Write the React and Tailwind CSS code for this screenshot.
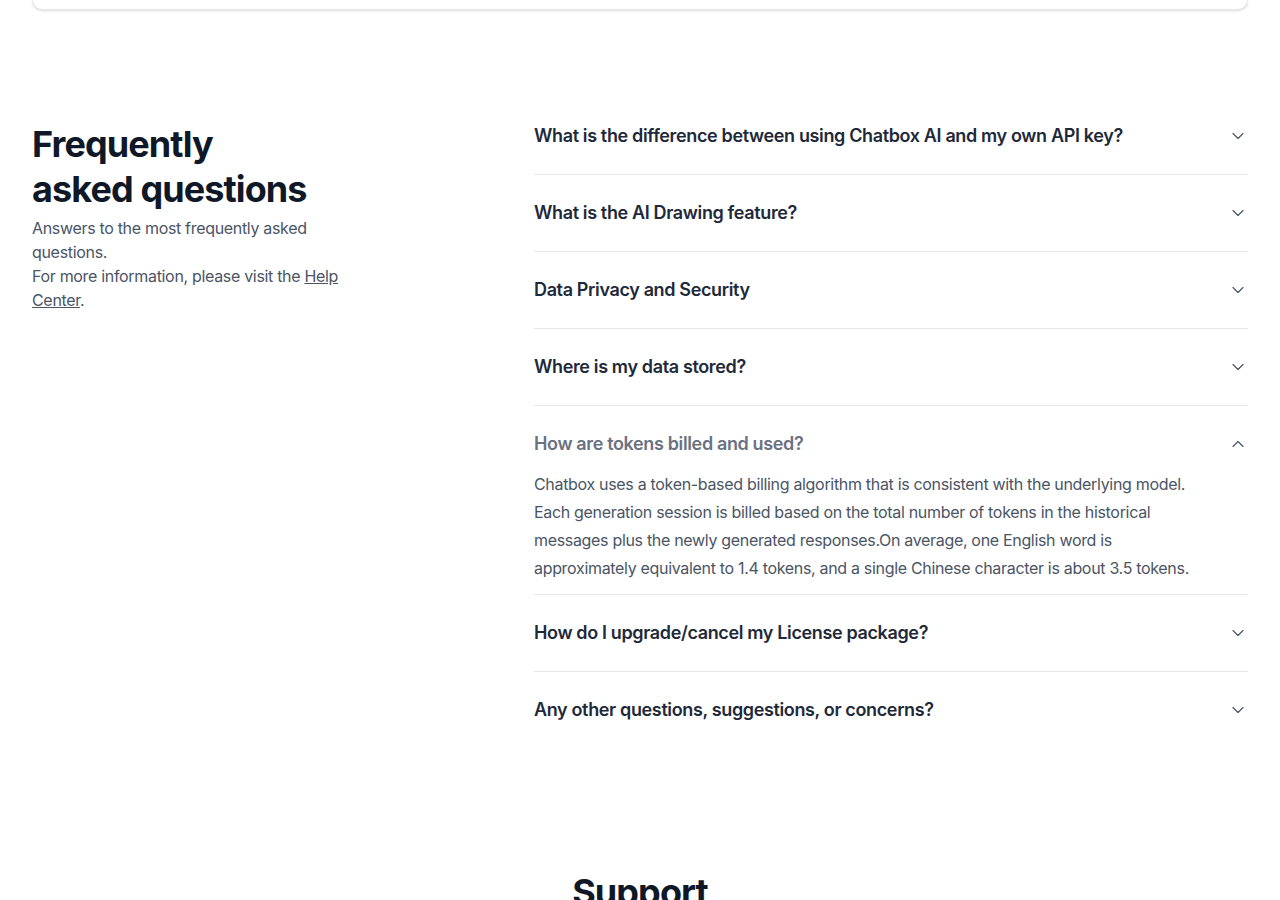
import { ChevronDown, ChevronUp } from "lucide-react";

const faqs = [
    { q: "What is the difference between using Chatbox AI and my own API key?" },
    { q: "What is the AI Drawing feature?" },
    { q: "Data Privacy and Security" },
    { q: "Where is my data stored?" },
    {
        q: "How are tokens billed and used?",
        a: "Chatbox uses a token-based billing algorithm that is consistent with the underlying model. Each generation session is billed based on the total number of tokens in the historical messages plus the newly generated responses.On average, one English word is approximately equivalent to 1.4 tokens, and a single Chinese character is about 3.5 tokens.",
        open: true,
    },
    { q: "How do I upgrade/cancel my License package?" },
    { q: "Any other questions, suggestions, or concerns?" },
];

function FaqItem({ q, a, open }) {
    return (
        <div>
            <button className="flex w-full items-center justify-between py-6 text-left">
                <span className={`text-lg leading-7 font-semibold tracking-[-0.02em] ${open ? "text-gray-500" : "text-gray-800"}`}>{q}</span>
                <span className="flex h-7 w-5 items-center justify-center text-gray-600">
                    {open ? <ChevronUp size={22} strokeWidth={1.4} /> : <ChevronDown size={22} strokeWidth={1.4} />}
                </span>
            </button>
            {open && (
                <div className="-mt-3 pb-3 pr-12">
                    <p className="text-base leading-7 tracking-[-0.02em] text-gray-600">{a}</p>
                </div>
            )}
        </div>
    );
}

export default function App() {
    return (
        <div className="min-h-screen bg-white font-['Inter',sans-serif] overflow-hidden">
            <div className="mx-auto max-w-7xl px-8">
                {/* bottom edge of the card above */}
                <div className="h-[10px] rounded-b-xl border-x border-b border-gray-200 bg-white shadow-sm"></div>

                <section className="mt-[88px] grid grid-cols-[470px_1fr] gap-8 pb-[124px]">
                    <div className="pt-6">
                        <h2 className="text-4xl leading-[45px] font-bold tracking-tight text-gray-900">
                            Frequently
                            <br />
                            asked questions
                        </h2>
                        <p className="mt-1 max-w-[345px] text-base leading-6 tracking-[-0.02em] text-gray-600">
                            Answers to the most frequently asked questions.
                            <br />
                            For more information, please visit the{" "}
                            <a href="#" className="underline">Help Center</a>.
                        </p>
                    </div>
                    <div className="divide-y divide-gray-200">
                        {faqs.map((f) => (
                            <FaqItem key={f.q} {...f} />
                        ))}
                    </div>
                </section>

                <h2 className="text-center text-4xl leading-10 font-bold tracking-tight text-gray-900">Support</h2>
            </div>
        </div>
    );
}
